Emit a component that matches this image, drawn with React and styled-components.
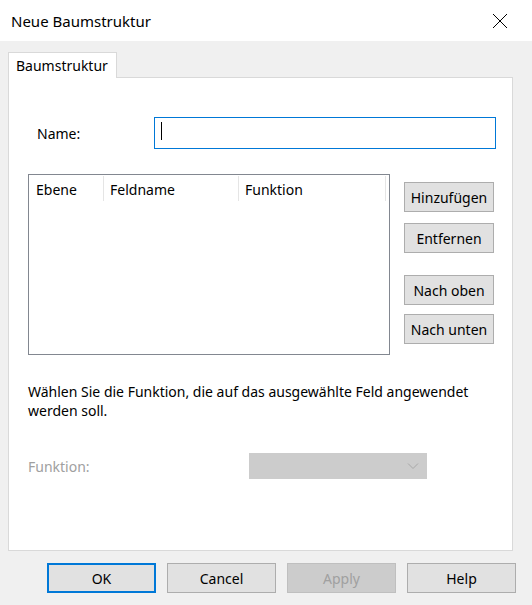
import styled, { createGlobalStyle } from 'styled-components';

const GlobalStyle = createGlobalStyle`
  html, body {
    margin: 0;
    padding: 0;
    background: #f0f0f0;
    font-family: 'Noto Sans', 'Segoe UI', sans-serif;
    color: #000;
  }
`;

const Window = styled.div`
  width: 532px;
  height: 605px;
  display: flex;
  flex-direction: column;
  background: #f0f0f0;
  overflow: hidden;
`;

const TitleBar = styled.div`
  height: 41px;
  background: #fff;
  display: flex;
  align-items: center;
  justify-content: space-between;
  padding: 0 24px 0 11px;
  flex-shrink: 0;
`;

const Title = styled.span`
  font-size: 15px;
`;

const Body = styled.div`
  padding: 11px 0 0 8px;
  display: flex;
  flex-direction: column;
`;

const TabStrip = styled.div`
  display: flex;
  height: 26px;
  margin-bottom: -1px;
  position: relative;
  z-index: 1;
`;

const Tab = styled.div`
  width: 109px;
  box-sizing: border-box;
  background: #fff;
  border: 1px solid #d9d9d9;
  border-bottom: none;
  padding: 3px 0 0 7px;
  font-size: 14px;
`;

const Panel = styled.div`
  width: 505px;
  height: 474px;
  box-sizing: border-box;
  background: #fff;
  border: 1px solid #d9d9d9;
  padding: 39px 0 0 19px;
  display: flex;
  flex-direction: column;
`;

const NameRow = styled.div`
  display: flex;
  align-items: center;
  height: 32px;
`;

const Label = styled.label`
  width: 126px;
  box-sizing: border-box;
  padding-left: 9px;
  font-size: 14px;
  color: ${p => (p.disabled ? '#a0a0a0' : '#000')};
`;

const TextInput = styled.div`
  width: 342px;
  height: 32px;
  box-sizing: border-box;
  border: 1px solid #0078d7;
  padding: 4px 0 0 6px;
`;

const Caret = styled.div`
  width: 1px;
  height: 18px;
  background: #000;
`;

const ListArea = styled.div`
  display: flex;
  margin-top: 25px;
  gap: 14px;
`;

const ListView = styled.div`
  width: 362px;
  height: 181px;
  box-sizing: border-box;
  border: 1px solid #828790;
  padding: 1px;
`;

const Header = styled.div`
  display: flex;
  height: 25px;
`;

const Column = styled.div`
  width: ${p => p.w}px;
  box-sizing: border-box;
  border-right: 1px solid #e5e5e5;
  padding: 4px 0 0 6px;
  font-size: 14px;
`;

const SideButtons = styled.div`
  display: flex;
  flex-direction: column;
  padding-top: 8px;
`;

const Button = styled.button`
  width: ${p => p.w || 90}px;
  height: 30px;
  box-sizing: border-box;
  background: ${p => (p.disabled ? '#cccccc' : '#e1e1e1')};
  border: 1px solid ${p => (p.primary ? '#0078d7' : p.disabled ? '#bfbfbf' : '#adadad')};
  box-shadow: ${p => (p.primary ? 'inset 0 0 0 1px #0078d7' : 'none')};
  font-family: inherit;
  font-size: 14px;
  color: ${p => (p.disabled ? '#a0a0a0' : '#000')};
  padding: 0;
  margin-top: ${p => p.mt || 0}px;
`;

const Hint = styled.p`
  margin: 27px 0 0 0;
  width: 475px;
  font-size: 14px;
  line-height: 19px;
`;

const SelectRow = styled.div`
  display: flex;
  align-items: center;
  margin-top: 33px;
`;

const FuncLabel = styled(Label)`
  width: 221px;
  padding-left: 0;
`;

const Select = styled.div`
  width: 178px;
  height: 26px;
  background: #cccccc;
  border: 1px solid #cccccc;
  box-sizing: border-box;
  display: flex;
  align-items: center;
  justify-content: flex-end;
  padding-right: 7px;
`;

const Footer = styled.div`
  display: flex;
  justify-content: flex-end;
  gap: 11px;
  padding: 12px 16px 0 0;
`;

const CloseIcon = () => (
  <svg width="16" height="16" viewBox="0 0 16 16">
    <path d="M1 1 L15 15 M15 1 L1 15" stroke="#000" strokeWidth="1" fill="none" />
  </svg>
);

const Chevron = () => (
  <svg width="12" height="8" viewBox="0 0 12 8">
    <path d="M1 1.5 L6 6.5 L11 1.5" stroke="#a8a8a8" strokeWidth="1" fill="none" />
  </svg>
);

export default function App() {
  return (
    <Window>
      <GlobalStyle />
      <TitleBar>
        <Title>Neue Baumstruktur</Title>
        <CloseIcon />
      </TitleBar>
      <Body>
        <TabStrip>
          <Tab>Baumstruktur</Tab>
        </TabStrip>
        <Panel>
          <NameRow>
            <Label>Name:</Label>
            <TextInput>
              <Caret />
            </TextInput>
          </NameRow>
          <ListArea>
            <ListView>
              <Header>
                <Column w={74}>Ebene</Column>
                <Column w={135}>Feldname</Column>
                <Column w={147}>Funktion</Column>
              </Header>
            </ListView>
            <SideButtons>
              <Button>Hinzufügen</Button>
              <Button mt={11}>Entfernen</Button>
              <Button mt={22}>Nach oben</Button>
              <Button mt={9}>Nach unten</Button>
            </SideButtons>
          </ListArea>
          <Hint>Wählen Sie die Funktion, die auf das ausgewählte Feld angewendet werden soll.</Hint>
          <SelectRow>
            <FuncLabel disabled>Funktion:</FuncLabel>
            <Select>
              <Chevron />
            </Select>
          </SelectRow>
        </Panel>
        <Footer>
          <Button w={109} primary>OK</Button>
          <Button w={109}>Cancel</Button>
          <Button w={109} disabled>Apply</Button>
          <Button w={109}>Help</Button>
        </Footer>
      </Body>
    </Window>
  );
}
